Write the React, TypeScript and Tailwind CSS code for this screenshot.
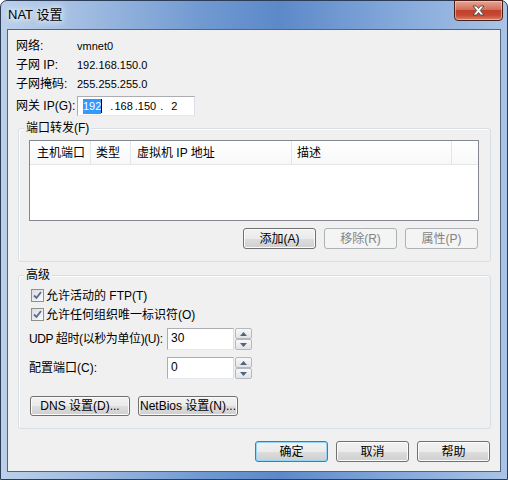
import React from "react";

const btnNormal =
  "border-[#707070] bg-[linear-gradient(to_bottom,#f2f2f2_0%,#ebebeb_50%,#dddddd_51%,#cfcfcf_100%)] shadow-[inset_0_0_0_1px_#fbfbfb] text-black";
const btnDisabled = "border-[#adb2b5] bg-[#f4f4f4] text-[#838383]";
const btnPrimary =
  "border-[#3c7fb1] bg-[linear-gradient(to_bottom,#f2f2f2_0%,#ebebeb_50%,#dddddd_51%,#cfcfcf_100%)] shadow-[inset_0_0_0_1px_#94d6f6] text-black";

function Btn({
  children,
  className = "",
  kind = "normal",
}: {
  children: React.ReactNode;
  className?: string;
  kind?: "normal" | "disabled" | "primary";
}) {
  const look = kind === "disabled" ? btnDisabled : kind === "primary" ? btnPrimary : btnNormal;
  return (
    <div
      className={`flex items-center justify-center whitespace-nowrap rounded-[3px] border text-[12px] leading-[14px] ${look} ${className}`}
    >
      {children}
    </div>
  );
}

function Check() {
  return (
    <div className="flex h-[13px] w-[13px] shrink-0 items-center justify-center border border-[#8e8f8f] bg-[linear-gradient(135deg,#dcdcdc,#fbfbfb)]">
      <svg width="9" height="9" viewBox="0 0 9 9">
        <path d="M1 4.5 L3.5 7 L8 1" fill="none" stroke="#56699a" strokeWidth="1.8" />
      </svg>
    </div>
  );
}

function SpinHalf({ up }: { up?: boolean }) {
  return (
    <div className="flex h-[11px] items-center justify-center rounded-[2px] border border-[#b4b9c0] bg-[linear-gradient(to_bottom,#f8f8f8,#e1e3e6)]">
      <svg width="7" height="4" viewBox="0 0 7 4">
        <path d={up ? "M0 4 L3.5 0 L7 4Z" : "M0 0 L3.5 4 L7 0Z"} fill="#4f6384" />
      </svg>
    </div>
  );
}

function NumberField({ value }: { value: string }) {
  return (
    <div className="flex shrink-0 items-start gap-[1px]">
      <div className="h-[22px] w-[67px] border border-[#abadb3] border-b-[#e3e9ef] border-r-[#dbdfe6] bg-white pl-[3px] pt-[2px] text-[12px] leading-[15px]">
        {value}
      </div>
      <div className="flex w-[17px] flex-col">
        <SpinHalf up />
        <SpinHalf />
      </div>
    </div>
  );
}

function Group({ title, className, children }: { title: string; className: string; children: React.ReactNode }) {
  return (
    <div
      className={`relative mx-[9px] ml-[10px] rounded-[3px] border border-[#d5dfe5] shadow-[inset_1px_1px_0_#ffffff] ${className}`}
    >
      <span className="absolute left-[5px] top-[-8px] bg-[#f0f0f0] px-[2px] text-[12px] leading-[14px]">{title}</span>
      {children}
    </div>
  );
}

export default function App() {
  return (
    <div className="h-[480px] w-[508px] bg-white font-[family-name:'Liberation_Sans','Noto_Sans_CJK_SC',sans-serif] text-black">
      <div className="flex h-[480px] w-[508px] flex-col rounded-t-[7px] border border-[#2b3d57] bg-[linear-gradient(to_right,#bcd0ea_0%,#a3bee2_15%,#7099d1_40%,#5d89c9_55%,#7ea4d8_75%,#a9c4e7_100%)] px-[6px]">
        {/* title bar */}
        <div className="relative flex h-[28px] items-center">
          <span className="ml-[1px] mt-[-1px] text-[13px] leading-[16px] [text-shadow:0_0_6px_#ffffff,0_0_10px_#ffffff]">
            NAT 设置
          </span>
          <div className="absolute right-[-2px] top-[-1px] flex h-[21px] w-[49px] items-center justify-center rounded-b-[4px] border border-[#4a1f1a] bg-[linear-gradient(to_bottom,#e8a493_0%,#d0705c_45%,#c2402c_50%,#c44a33_75%,#d9836a_100%)] shadow-[inset_0_0_0_1px_rgba(255,220,210,0.5)]">
            <svg width="13" height="11" viewBox="0 0 13 11">
              <path
                d="M1 1 H4.5 L6.5 3.5 L8.5 1 H12 L8.3 5.5 L12 10 H8.5 L6.5 7.5 L4.5 10 H1 L4.7 5.5 Z"
                fill="#ffffff"
                stroke="#3a3a3a"
                strokeWidth="0.8"
              />
            </svg>
          </div>
        </div>

        {/* client area */}
        <div className="flex h-[443px] w-[494px] flex-col border border-[#53647c] bg-[#f0f0f0]">
          <div className="flex flex-col pl-[8px] pt-[6px] text-[12px]">
            <div className="flex h-[19px] items-center">
              <span className="w-[61px] leading-[14px]">网络:</span>
              <span className="text-[11px] leading-[14px]">vmnet0</span>
            </div>
            <div className="flex h-[19px] items-center">
              <span className="w-[61px] leading-[14px]">子网 IP:</span>
              <span className="text-[11px] leading-[14px]">192.168.150.0</span>
            </div>
            <div className="flex h-[19px] items-center">
              <span className="w-[61px] leading-[14px]">子网掩码:</span>
              <span className="text-[11px] leading-[14px]">255.255.255.0</span>
            </div>
            <div className="mt-[3px] flex h-[20px] items-center">
              <span className="w-[61px] whitespace-nowrap leading-[14px]">网关 IP(G):</span>
              <div className="flex h-[20px] w-[118px] items-center border border-[#abadb3] border-b-[#e3e9ef] border-r-[#dbdfe6] bg-white text-[11px] leading-[15px]">
                <span className="ml-[5px] bg-[#3399ff] text-white">192</span>
                <span className="h-[14px] w-[1px] bg-black" />
                <span className="ml-[8px]">.</span>
                <span className="ml-[1px]">168</span>
                <span className="ml-[2px]">.</span>
                <span>150</span>
                <span className="ml-[4px]">.</span>
                <span className="ml-[8px]">2</span>
              </div>
            </div>
          </div>

          {/* port forwarding */}
          <Group title="端口转发(F)" className="mt-[12px] h-[134px]">
            <div className="ml-[10px] mr-[11px] mt-[11px] h-[81px] border border-[#828790] bg-white">
              <div className="flex h-[24px] border-b border-[#e5e5e5] bg-[linear-gradient(to_bottom,#ffffff,#f7f8f9)] text-[12px] leading-[14px]">
                <div className="flex w-[61px] items-center border-r border-[#e3e5e8] pl-[7px]">主机端口</div>
                <div className="flex w-[40px] items-center border-r border-[#e3e5e8] pl-[5px]">类型</div>
                <div className="flex w-[161px] items-center border-r border-[#e3e5e8] pl-[6px]">虚拟机 IP 地址</div>
                <div className="flex w-[160px] items-center border-r border-[#e3e5e8] pl-[5px]">描述</div>
                <div className="flex-1" />
              </div>
            </div>
            <div className="mr-[12px] mt-[7px] flex justify-end gap-[8px]">
              <Btn className="h-[21px] w-[73px]">添加(A)</Btn>
              <Btn className="h-[21px] w-[73px]" kind="disabled">
                移除(R)
              </Btn>
              <Btn className="h-[21px] w-[73px]" kind="disabled">
                属性(P)
              </Btn>
            </div>
          </Group>

          {/* advanced */}
          <Group title="高级" className="mt-[13px] h-[154px]">
            <div className="flex flex-col pl-[12px] pt-[13px] text-[12px] leading-[14px]">
              <div className="flex h-[19px] items-start gap-[2px]">
                <Check />
                <span>允许活动的 FTP(T)</span>
              </div>
              <div className="flex h-[19px] items-start gap-[2px]">
                <Check />
                <span>允许任何组织唯一标识符(O)</span>
              </div>
            </div>
            <div className="ml-[10px] flex flex-col gap-[7px] pt-[1px] text-[12px] leading-[14px]">
              <div className="flex items-center">
                <span className="w-[138px] shrink-0 whitespace-nowrap tracking-[-0.4px]">UDP 超时(以秒为单位)(U):</span>
                <NumberField value="30" />
              </div>
              <div className="flex items-center">
                <span className="w-[138px] shrink-0 whitespace-nowrap">配置端口(C):</span>
                <NumberField value="0" />
              </div>
            </div>
            <div className="ml-[11px] mt-[17px] flex gap-[8px]">
              <Btn className="h-[20px] w-[100px]">DNS 设置(D)...</Btn>
              <Btn className="h-[20px] w-[100px]">NetBios 设置(N)...</Btn>
            </div>
          </Group>

          <div className="mr-[10px] mt-[12px] flex justify-end gap-[8px]">
            <Btn className="h-[21px] w-[73px]" kind="primary">
              确定
            </Btn>
            <Btn className="h-[21px] w-[73px]">取消</Btn>
            <Btn className="h-[21px] w-[73px]">帮助</Btn>
          </div>
        </div>
      </div>
    </div>
  );
}
